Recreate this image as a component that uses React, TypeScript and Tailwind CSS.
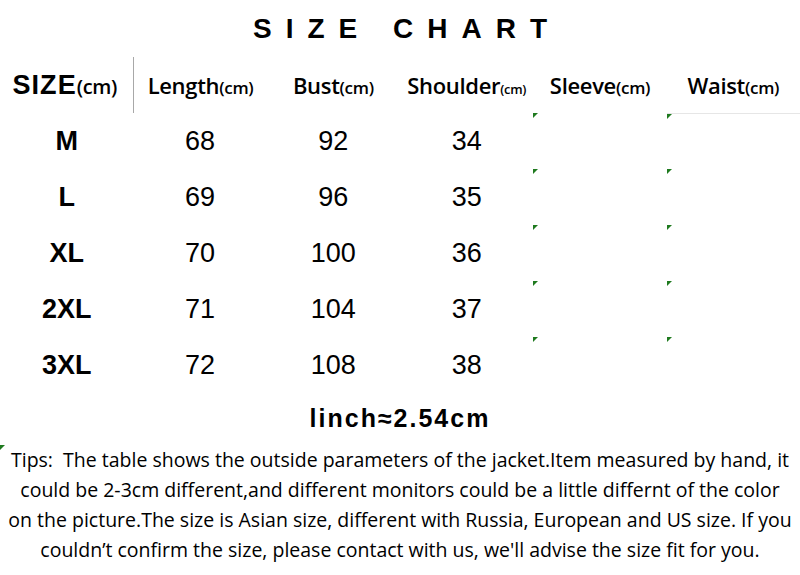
const rows = [
  ["M", "68", "92", "34"],
  ["L", "69", "96", "35"],
  ["XL", "70", "100", "36"],
  ["2XL", "71", "104", "37"],
  ["3XL", "72", "108", "38"],
];

const Mark = () => (
  <svg width="5" height="5" viewBox="0 0 5 5" className="absolute left-0 top-0">
    <polygon points="0,0 5,0 0,5" fill="#1f7a1f" />
  </svg>
);

const Head = ({ label, small }: { label: string; small?: boolean }) => (
  <span className="whitespace-nowrap font-['Open_Sans',sans-serif] font-semibold tracking-[-0.02em]">
    <span className="text-[22px]">{label}</span>
    <span className={small ? "text-[13px]" : "text-[17px]"}>(cm)</span>
  </span>
);

export default function App() {
  return (
    <div className="w-[800px] h-[575px] bg-white overflow-hidden font-['Liberation_Sans',Arial,sans-serif] text-black">
      <div className="h-[57px] flex items-center justify-center">
        <h1 className="text-[28px] font-bold tracking-[0.5em] pl-[0.5em] leading-none">SIZE CHART</h1>
      </div>

      <div className="grid grid-cols-6 h-[56px] items-center">
        <div className="flex justify-center items-baseline pr-1">
          <span className="text-[27px] font-bold tracking-[0.04em]">SIZE</span>
          <span className="text-[20px] font-['Open_Sans',sans-serif] font-semibold tracking-[-0.02em]">(cm)</span>
        </div>
        <div className="h-full flex items-center justify-center border-l border-[#a8a8a8]">
          <Head label="Length" />
        </div>
        <div className="flex justify-center">
          <Head label="Bust" />
        </div>
        <div className="flex justify-center">
          <Head label="Shoulder" small />
        </div>
        <div className="flex justify-center">
          <Head label="Sleeve" />
        </div>
        <div className="flex justify-center">
          <Head label="Waist" />
        </div>
      </div>

      {rows.map((r, i) => (
        <div key={r[0]} className="grid grid-cols-6 h-[56px] items-center">
          <div className="text-center text-[27px] font-bold">{r[0]}</div>
          <div className="text-center text-[27px]">{r[1]}</div>
          <div className="text-center text-[27px]">{r[2]}</div>
          <div className="text-center text-[27px]">{r[3]}</div>
          <div className="relative h-full">
            <Mark />
          </div>
          <div className={"relative h-full " + (i === 0 ? "border-t border-[#e6e6e6]" : "")}>
            <Mark />
          </div>
        </div>
      ))}

      <div className="h-[52px] flex items-center justify-center">
        <span className="text-[25px] font-bold tracking-[0.08em]">linch≈2.54cm</span>
      </div>

      <div className="relative">
        <Mark />
        <p className="text-center whitespace-nowrap text-[19.5px] leading-[30px] font-['Open_Sans',sans-serif]">
          Tips:&nbsp; The table shows the outside parameters of the jacket.Item measured by hand, it
          <br />
          could be 2-3cm different,and different monitors could be a little differnt of the color
          <br />
          on the picture.The size is Asian size, different with Russia, European and US size. If you
          <br />
          couldn’t confirm the size, please contact with us, we'll advise the size fit for you.
        </p>
      </div>
    </div>
  );
}
